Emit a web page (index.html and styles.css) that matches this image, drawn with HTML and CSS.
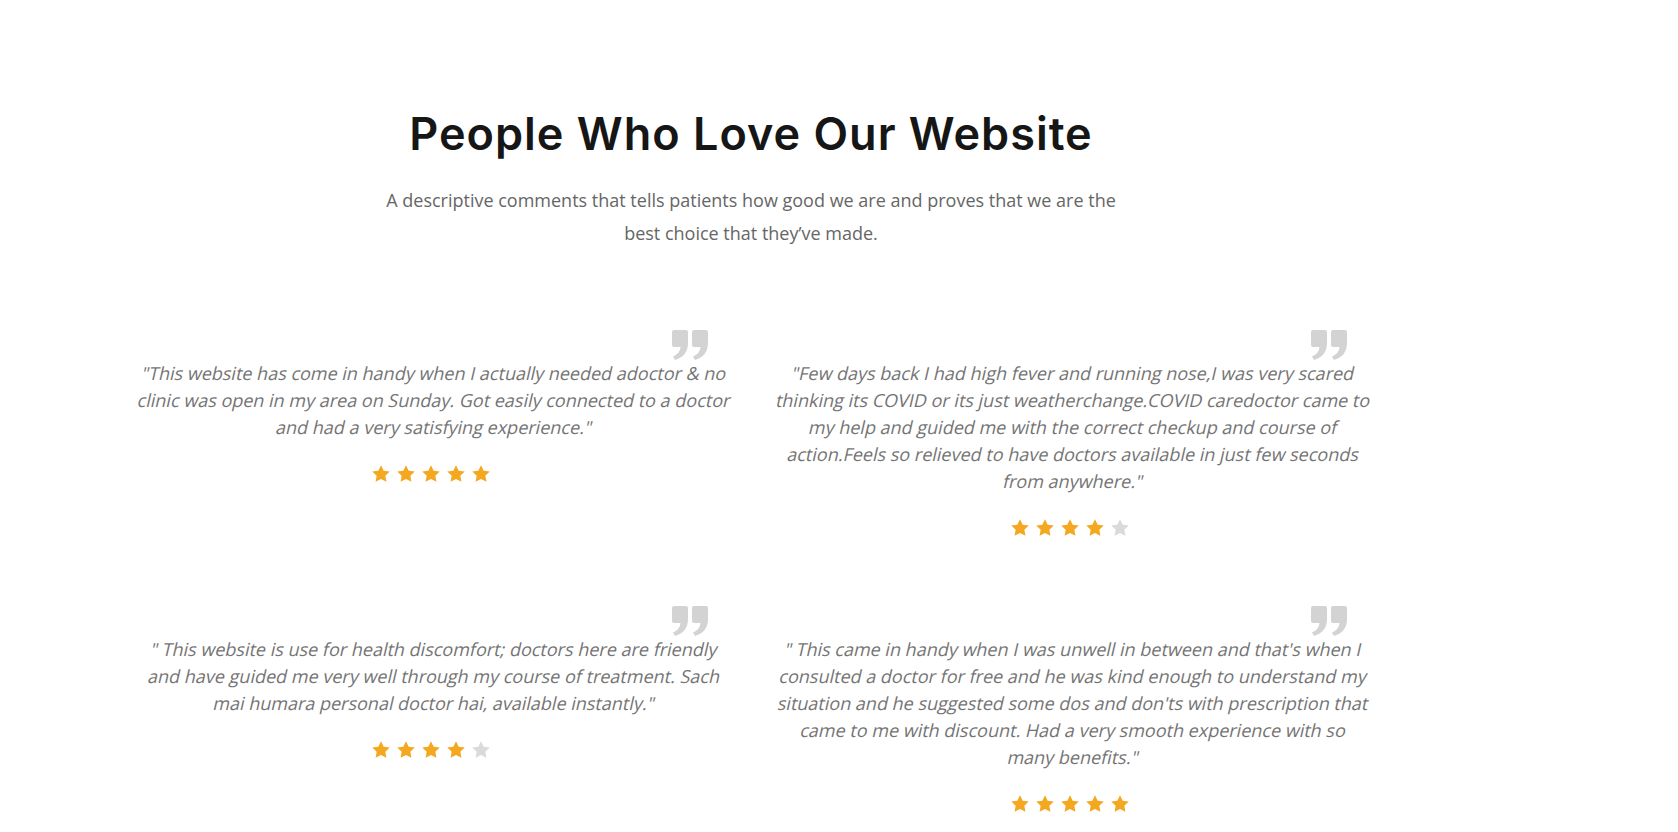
FILE: index.html
```html
<!DOCTYPE html>
<html lang="en">
<head>
<meta charset="utf-8">
<title>Testimonials</title>
<link rel="stylesheet" href="styles.css">
</head>
<body>
<section class="testimonials">
  <header class="section-head">
    <h2 class="section-title">People Who Love Our Website</h2>
    <p class="section-sub">A descriptive comments that tells patients how good we are and proves that we are the best choice that they’ve made.</p>
  </header>
  <div class="review-grid">
    <article class="review">
      <svg class="quote-icon" viewBox="0 0 36 30" aria-hidden="true"><path d="M2 0H14Q16 0 16 2V13Q16 26 3 30L1 26.5Q8 23.5 8.5 17H2Q0 17 0 15V2Q0 0 2 0Z"/><path d="M22 0H34Q36 0 36 2V13Q36 26 23 30L21 26.5Q28 23.5 28.5 17H22Q20 17 20 15V2Q20 0 22 0Z"/></svg>
      <p class="review-text">
        <span class="line">"This website has come in handy when I actually needed adoctor &amp; no</span>
        <span class="line">clinic was open in my area on Sunday. Got easily connected to a doctor</span>
        <span class="line">and had a very satisfying experience."</span>
      </p>
      <div class="stars">
        <svg class="star on" viewBox="0 0 24 24"><path d="M12 1.5l3.2 6.6 7.3 1-5.3 5.1 1.3 7.2L12 18l-6.5 3.4 1.3-7.2L1.5 9.1l7.3-1z"/></svg>
        <svg class="star on" viewBox="0 0 24 24"><path d="M12 1.5l3.2 6.6 7.3 1-5.3 5.1 1.3 7.2L12 18l-6.5 3.4 1.3-7.2L1.5 9.1l7.3-1z"/></svg>
        <svg class="star on" viewBox="0 0 24 24"><path d="M12 1.5l3.2 6.6 7.3 1-5.3 5.1 1.3 7.2L12 18l-6.5 3.4 1.3-7.2L1.5 9.1l7.3-1z"/></svg>
        <svg class="star on" viewBox="0 0 24 24"><path d="M12 1.5l3.2 6.6 7.3 1-5.3 5.1 1.3 7.2L12 18l-6.5 3.4 1.3-7.2L1.5 9.1l7.3-1z"/></svg>
        <svg class="star on" viewBox="0 0 24 24"><path d="M12 1.5l3.2 6.6 7.3 1-5.3 5.1 1.3 7.2L12 18l-6.5 3.4 1.3-7.2L1.5 9.1l7.3-1z"/></svg>
      </div>
    </article>
    <article class="review">
      <svg class="quote-icon" viewBox="0 0 36 30" aria-hidden="true"><path d="M2 0H14Q16 0 16 2V13Q16 26 3 30L1 26.5Q8 23.5 8.5 17H2Q0 17 0 15V2Q0 0 2 0Z"/><path d="M22 0H34Q36 0 36 2V13Q36 26 23 30L21 26.5Q28 23.5 28.5 17H22Q20 17 20 15V2Q20 0 22 0Z"/></svg>
      <p class="review-text">
        <span class="line">"Few days back I had high fever and running nose,I was very scared</span>
        <span class="line">thinking its COVID or its just weatherchange.COVID caredoctor came to</span>
        <span class="line">my help and guided me with the correct checkup and course of</span>
        <span class="line">action.Feels so relieved to have doctors available in just few seconds</span>
        <span class="line">from anywhere."</span>
      </p>
      <div class="stars">
        <svg class="star on" viewBox="0 0 24 24"><path d="M12 1.5l3.2 6.6 7.3 1-5.3 5.1 1.3 7.2L12 18l-6.5 3.4 1.3-7.2L1.5 9.1l7.3-1z"/></svg>
        <svg class="star on" viewBox="0 0 24 24"><path d="M12 1.5l3.2 6.6 7.3 1-5.3 5.1 1.3 7.2L12 18l-6.5 3.4 1.3-7.2L1.5 9.1l7.3-1z"/></svg>
        <svg class="star on" viewBox="0 0 24 24"><path d="M12 1.5l3.2 6.6 7.3 1-5.3 5.1 1.3 7.2L12 18l-6.5 3.4 1.3-7.2L1.5 9.1l7.3-1z"/></svg>
        <svg class="star on" viewBox="0 0 24 24"><path d="M12 1.5l3.2 6.6 7.3 1-5.3 5.1 1.3 7.2L12 18l-6.5 3.4 1.3-7.2L1.5 9.1l7.3-1z"/></svg>
        <svg class="star off" viewBox="0 0 24 24"><path d="M12 1.5l3.2 6.6 7.3 1-5.3 5.1 1.3 7.2L12 18l-6.5 3.4 1.3-7.2L1.5 9.1l7.3-1z"/></svg>
      </div>
    </article>
    <article class="review">
      <svg class="quote-icon" viewBox="0 0 36 30" aria-hidden="true"><path d="M2 0H14Q16 0 16 2V13Q16 26 3 30L1 26.5Q8 23.5 8.5 17H2Q0 17 0 15V2Q0 0 2 0Z"/><path d="M22 0H34Q36 0 36 2V13Q36 26 23 30L21 26.5Q28 23.5 28.5 17H22Q20 17 20 15V2Q20 0 22 0Z"/></svg>
      <p class="review-text">
        <span class="line">" This website is use for health discomfort; doctors here are friendly</span>
        <span class="line">and have guided me very well through my course of treatment. Sach</span>
        <span class="line">mai humara personal doctor hai, available instantly."</span>
      </p>
      <div class="stars">
        <svg class="star on" viewBox="0 0 24 24"><path d="M12 1.5l3.2 6.6 7.3 1-5.3 5.1 1.3 7.2L12 18l-6.5 3.4 1.3-7.2L1.5 9.1l7.3-1z"/></svg>
        <svg class="star on" viewBox="0 0 24 24"><path d="M12 1.5l3.2 6.6 7.3 1-5.3 5.1 1.3 7.2L12 18l-6.5 3.4 1.3-7.2L1.5 9.1l7.3-1z"/></svg>
        <svg class="star on" viewBox="0 0 24 24"><path d="M12 1.5l3.2 6.6 7.3 1-5.3 5.1 1.3 7.2L12 18l-6.5 3.4 1.3-7.2L1.5 9.1l7.3-1z"/></svg>
        <svg class="star on" viewBox="0 0 24 24"><path d="M12 1.5l3.2 6.6 7.3 1-5.3 5.1 1.3 7.2L12 18l-6.5 3.4 1.3-7.2L1.5 9.1l7.3-1z"/></svg>
        <svg class="star off" viewBox="0 0 24 24"><path d="M12 1.5l3.2 6.6 7.3 1-5.3 5.1 1.3 7.2L12 18l-6.5 3.4 1.3-7.2L1.5 9.1l7.3-1z"/></svg>
      </div>
    </article>
    <article class="review">
      <svg class="quote-icon" viewBox="0 0 36 30" aria-hidden="true"><path d="M2 0H14Q16 0 16 2V13Q16 26 3 30L1 26.5Q8 23.5 8.5 17H2Q0 17 0 15V2Q0 0 2 0Z"/><path d="M22 0H34Q36 0 36 2V13Q36 26 23 30L21 26.5Q28 23.5 28.5 17H22Q20 17 20 15V2Q20 0 22 0Z"/></svg>
      <p class="review-text">
        <span class="line">" This came in handy when I was unwell in between and that's when I</span>
        <span class="line">consulted a doctor for free and he was kind enough to understand my</span>
        <span class="line">situation and he suggested some dos and don'ts with prescription that</span>
        <span class="line">came to me with discount. Had a very smooth experience with so</span>
        <span class="line">many benefits."</span>
      </p>
      <div class="stars">
        <svg class="star on" viewBox="0 0 24 24"><path d="M12 1.5l3.2 6.6 7.3 1-5.3 5.1 1.3 7.2L12 18l-6.5 3.4 1.3-7.2L1.5 9.1l7.3-1z"/></svg>
        <svg class="star on" viewBox="0 0 24 24"><path d="M12 1.5l3.2 6.6 7.3 1-5.3 5.1 1.3 7.2L12 18l-6.5 3.4 1.3-7.2L1.5 9.1l7.3-1z"/></svg>
        <svg class="star on" viewBox="0 0 24 24"><path d="M12 1.5l3.2 6.6 7.3 1-5.3 5.1 1.3 7.2L12 18l-6.5 3.4 1.3-7.2L1.5 9.1l7.3-1z"/></svg>
        <svg class="star on" viewBox="0 0 24 24"><path d="M12 1.5l3.2 6.6 7.3 1-5.3 5.1 1.3 7.2L12 18l-6.5 3.4 1.3-7.2L1.5 9.1l7.3-1z"/></svg>
        <svg class="star on" viewBox="0 0 24 24"><path d="M12 1.5l3.2 6.6 7.3 1-5.3 5.1 1.3 7.2L12 18l-6.5 3.4 1.3-7.2L1.5 9.1l7.3-1z"/></svg>
      </div>
    </article>
  </div>
</section>
</body>
</html>
```

FILE: styles.css
```css
html, body {
  margin: 0;
  padding: 0;
  background: #ffffff;
}

body {
  font-family: "Open Sans", "Liberation Sans", sans-serif;
  overflow: hidden;
}

.testimonials {
  width: 1262px;
  margin-left: 120px;
  padding-top: 108px;
}

.section-head {
  display: flex;
  flex-direction: column;
  align-items: center;
  text-align: center;
}

.section-title {
  margin: 0;
  font-family: "Inter", "Liberation Sans", sans-serif;
  font-weight: 600;
  font-size: 45px;
  line-height: 52px;
  color: #161616;
  letter-spacing: 1px;
}

.section-sub {
  margin: 24px 0 0;
  width: 750px;
  font-size: 18px;
  line-height: 33px;
  color: #666666;
}

.review-grid {
  display: grid;
  grid-template-columns: 1fr 1fr;
  column-gap: 10px;
  row-gap: 68px;
  margin-top: 80px;
}

.review {
  display: flex;
  flex-direction: column;
  align-items: center;
  padding: 0 12px;
}

.quote-icon {
  align-self: flex-end;
  width: 36px;
  height: 30px;
  margin-right: 29px;
  fill: #d3d3d3;
}

.review-text {
  margin: 0;
  width: 605px;
  font-size: 18px;
  line-height: 27px;
  color: #747474;
  text-align: center;
}

.review-text .line {
  display: block;
  white-space: nowrap;
  transform: skewX(-13deg);
}

.stars {
  display: flex;
  margin-top: 23px;
  padding-right: 2px;
}

.star {
  width: 20px;
  height: 20px;
  margin-right: 5px;
}

.star.on {
  fill: #f3a81f;
}

.star.off {
  fill: #dadada;
}
```
